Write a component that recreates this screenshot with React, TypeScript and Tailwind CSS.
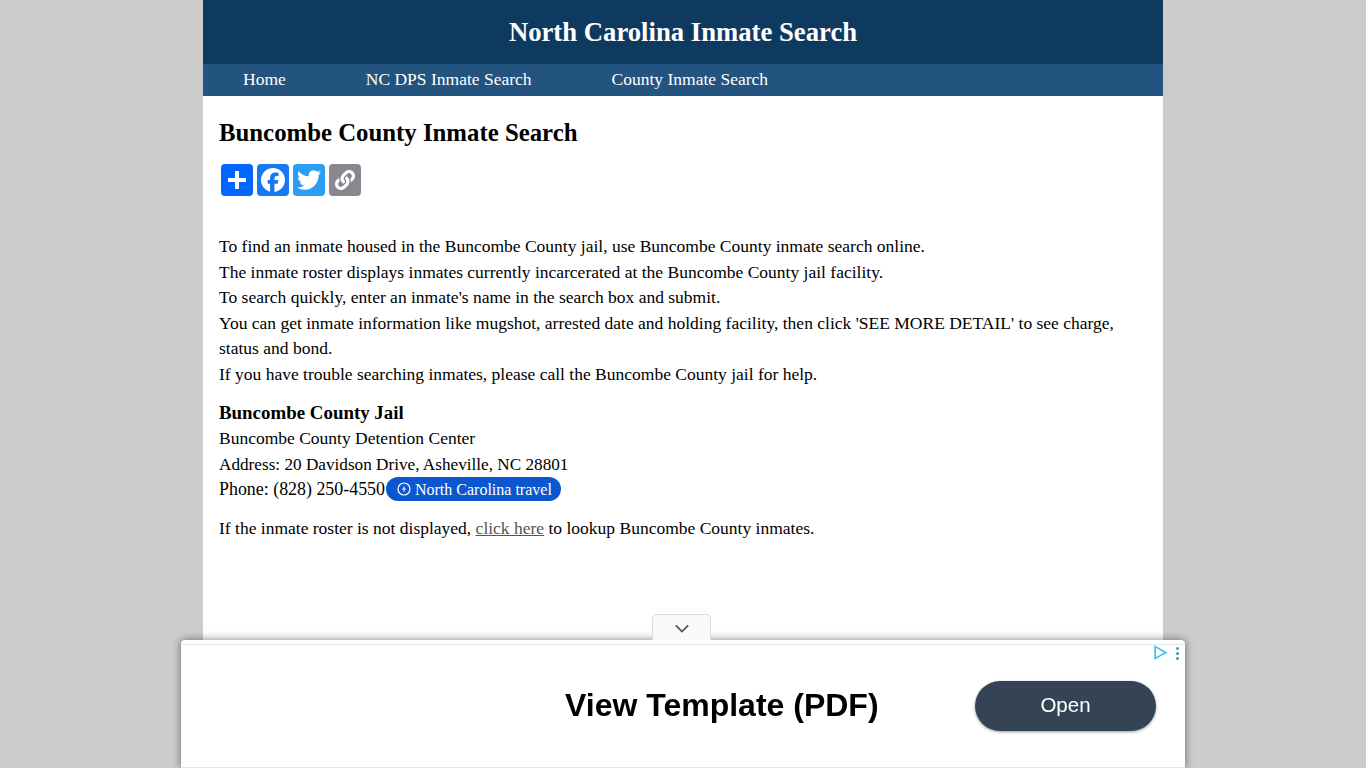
import { FaLink } from 'react-icons/fa';

const georgia = "font-['Liberation_Serif',serif]";

function ShareButton({ color, children }: { color: string; children: React.ReactNode }) {
  return (
    <a className={`flex h-8 w-8 items-center justify-center rounded-[4px] ${color}`}>
      {children}
    </a>
  );
}

function ShareBar() {
  return (
    <div className="mt-[17px] flex gap-1 pl-[2px]">
      <ShareButton color="bg-[#0166ff]">
        <svg viewBox="0 0 32 32" className="h-8 w-8" fill="#fff">
          <path d="M14 7h4v7h7v4h-7v7h-4v-7H7v-4h7z" />
        </svg>
      </ShareButton>
      <ShareButton color="bg-[#1877f2]">
        <svg viewBox="0 0 32 32" className="h-8 w-8" fill="#fff">
          <path d="M28 16c0-6.627-5.373-12-12-12S4 9.373 4 16c0 5.628 3.875 10.35 9.101 11.647v-7.98h-2.474V16H13.1v-1.58c0-4.085 1.849-5.978 5.859-5.978.76 0 2.072.15 2.608.298v3.325c-.283-.03-.775-.045-1.386-.045-1.967 0-2.728.745-2.728 2.683V16h3.92l-.673 3.667h-3.247v8.245C23.395 27.195 28 22.135 28 16" />
        </svg>
      </ShareButton>
      <ShareButton color="bg-[#2a9df4]">
        <svg viewBox="0 0 32 32" className="h-8 w-8" fill="#fff">
          <path d="M28 8.557a10 10 0 0 1-2.828.775 4.93 4.93 0 0 0 2.166-2.725 9.7 9.7 0 0 1-3.13 1.194 4.92 4.92 0 0 0-3.593-1.55 4.924 4.924 0 0 0-4.794 6.049c-4.09-.21-7.72-2.17-10.15-5.15a4.94 4.94 0 0 0-.665 2.477c0 1.71.87 3.214 2.19 4.1a5 5 0 0 1-2.23-.616v.06c0 2.39 1.7 4.38 3.952 4.83-.414.115-.85.174-1.297.174q-.476-.001-.928-.086a4.935 4.935 0 0 0 4.6 3.42 9.9 9.9 0 0 1-6.114 2.107q-.597 0-1.175-.068a13.95 13.95 0 0 0 7.55 2.213c9.056 0 14.01-7.507 14.01-14.013q0-.32-.015-.637c.96-.695 1.795-1.56 2.455-2.55z" />
        </svg>
      </ShareButton>
      <ShareButton color="bg-[#888990]">
        <FaLink className="h-[20px] w-[20px] text-white" />
      </ShareButton>
    </div>
  );
}

function AdBar() {
  return (
    <div className="fixed bottom-0 left-[181px] h-[128px] w-[1004px] rounded-t-[4px] border-b border-[#e6e6e6] bg-white shadow-[0_0_8px_rgba(0,0,0,0.5)]">
      <div className="absolute -top-[26px] left-[471px] flex h-[26px] w-[59px] items-center justify-center rounded-t-[5px] border border-b-0 border-[#dcdcdc] bg-[#fafafa] pt-[2px]">
        <svg viewBox="0 0 18 10" className="h-[9px] w-[16px]" fill="none" stroke="#555" strokeWidth="2">
          <path d="M2 1.5l7 7 7-7" />
        </svg>
      </div>
      <div className="mt-[4px] h-px w-full bg-[#e6e6e6]" />
      <div className="absolute right-[17px] top-[5px]">
        <svg viewBox="0 0 14 14" className="h-[15px] w-[15px]" fill="none" stroke="#35c3e8" strokeWidth="1.5">
          <path d="M2 1.5v11l10-5.5z" />
        </svg>
      </div>
      <div className="absolute right-[6px] top-[7px] flex flex-col gap-[2px]">
        <span className="h-[3px] w-[3px] rounded-full bg-[#3a9fb5]" />
        <span className="h-[3px] w-[3px] rounded-full bg-[#3a9fb5]" />
        <span className="h-[3px] w-[3px] rounded-full bg-[#3a9fb5]" />
      </div>
      <div className="flex h-[121px] items-center font-['Liberation_Sans',sans-serif]">
        <span className="mb-[2px] ml-[384px] w-[410px] text-[32px] font-bold leading-none text-black">View Template (PDF)</span>
        <span className="flex h-[50px] w-[181px] items-center justify-center rounded-full bg-[#344454] text-[20.5px] text-white shadow-[0_1px_3px_rgba(0,0,0,0.4)]">
          Open
        </span>
      </div>
    </div>
  );
}

export default function App() {
  return (
    <div className={`min-h-screen bg-[#cccccc] ${georgia}`}>
      <div className="mx-auto min-h-screen w-[960px] bg-white text-[17.5px] leading-[25.6px] text-black">
        <header className="flex h-16 items-center justify-center bg-[#0f3a5f]">
          <h1 className="pt-[1px] text-[26.7px] font-bold text-white">North Carolina Inmate Search</h1>
        </header>
        <nav className="flex h-8 items-center gap-20 bg-[#22547f] pl-10 text-[17.5px] text-white">
          <a>Home</a>
          <a>NC DPS Inmate Search</a>
          <a>County Inmate Search</a>
        </nav>
        <main className="px-4">
          <h2 className="pt-[23px] text-[24.8px] font-bold leading-[28px]">Buncombe County Inmate Search</h2>
          <ShareBar />
          <p className="mt-[38px]">
            To find an inmate housed in the Buncombe County jail, use Buncombe County inmate search online.<br />
            The inmate roster displays inmates currently incarcerated at the Buncombe County jail facility.<br />
            To search quickly, enter an inmate's name in the search box and submit.<br />
            You can get inmate information like mugshot, arrested date and holding facility, then click 'SEE MORE DETAIL' to see charge, status and bond.<br />
            If you have trouble searching inmates, please call the Buncombe County jail for help.
          </p>
          <p className="mt-[13px]">
            <b className="text-[18.9px] leading-none">Buncombe County Jail</b><br />
            Buncombe County Detention Center<br />
            <span className="text-[17.2px]">Address: 20 Davidson Drive, Asheville, NC 28801</span><br />
            <span className="text-[17.9px]">Phone: (828) 250-4550</span>
            <span className="relative -top-[2px] ml-[1px] inline-flex h-6 items-center gap-1 rounded-full bg-[#0b57d0] pl-[11px] pr-[9px] align-middle text-[16px] text-white">
              <svg viewBox="0 0 14 14" className="h-[14px] w-[14px]" fill="none" stroke="#fff" strokeWidth="1.2">
                <circle cx="7" cy="7" r="6" />
                <path d="M7.8 3.2L5 7.6h1.9l-.7 3.2 2.8-4.4H7.1z" fill="#fff" stroke="none" />
              </svg>
              North Carolina travel
            </span>
          </p>
          <p className="mt-[13px]">
            If the inmate roster is not displayed, <a className="text-[#555] underline">click here</a> to lookup Buncombe County inmates.
          </p>
        </main>
      </div>
      <AdBar />
    </div>
  );
}
